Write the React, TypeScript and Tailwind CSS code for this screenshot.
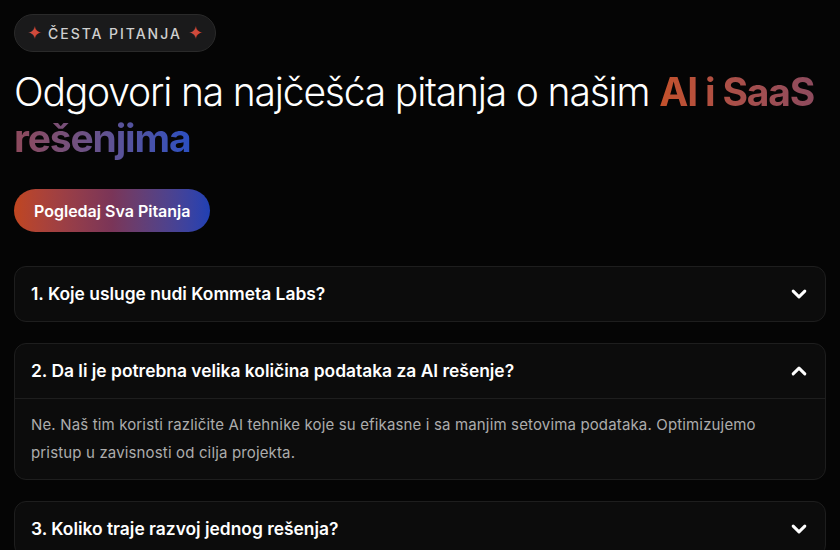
import React from "react";

const faqs = [
  { q: "1. Koje usluge nudi Kommeta Labs?", a: "", open: false },
  {
    q: "2. Da li je potrebna velika količina podataka za AI rešenje?",
    a: "Ne. Naš tim koristi različite AI tehnike koje su efikasne i sa manjim setovima podataka. Optimizujemo pristup u zavisnosti od cilja projekta.",
    open: true,
  },
  { q: "3. Koliko traje razvoj jednog rešenja?", a: "", open: false },
];

function Chevron({ up }: { up: boolean }) {
  return (
    <svg width="20" height="20" viewBox="0 0 24 24" fill="none" stroke="white" strokeWidth="3.6" strokeLinecap="round" strokeLinejoin="round">
      {up ? <path d="M5 15.5l7-7 7 7" /> : <path d="M5 8.5l7 7 7-7" />}
    </svg>
  );
}

export default function App() {
  return (
    <div className="w-[840px] h-[550px] overflow-hidden bg-[#050505] px-[14px] pt-[14px] font-['Inter',sans-serif]">
      <div className="inline-flex items-center gap-1.5 h-[38px] px-3 rounded-full bg-[#1a1a1b] border border-[#2a2a2a]">
        <span className="text-[#d04a3c] text-[18px] leading-none">✦</span>
        <span className="text-[#cfcfcf] text-[14px] font-medium tracking-[0.14em]">ČESTA PITANJA</span>
        <span className="text-[#d04a3c] text-[18px] leading-none">✦</span>
      </div>

      <h1 className="mt-[17px] text-[39px] leading-[46px] font-light text-white tracking-[-0.03em]">
        Odgovori na najčešća pitanja o našim{" "}
        <span className="font-bold bg-gradient-to-r from-[#c4512a] via-[#8a4a60] to-[#2b4fc0] bg-clip-text text-transparent">
          AI i SaaS rešenjima
        </span>
      </h1>

      <button className="mt-[28px] h-[43px] px-5 rounded-full bg-gradient-to-r from-[#c0461f] via-[#7a3558] to-[#1f40b4] text-white font-semibold text-[16px]">
        Pogledaj Sva Pitanja
      </button>

      <div className="mt-[34px] flex flex-col gap-[21px]">
        {faqs.map((f) => (
          <div key={f.q} className="rounded-xl bg-[#0c0c0c] border border-[#1e1e1e]">
            <div className="h-[54px] flex items-center justify-between pl-4 pr-4">
              <span className="text-white font-semibold text-[17.4px]">{f.q}</span>
              <Chevron up={f.open} />
            </div>
            {f.open && (
              <div className="border-t border-[#1e1e1e] px-4 pt-[12px] pb-[12px] text-[#acacac] text-[15px] tracking-[0.01em] leading-[28px]">
                {f.a}
              </div>
            )}
          </div>
        ))}
      </div>
    </div>
  );
}
